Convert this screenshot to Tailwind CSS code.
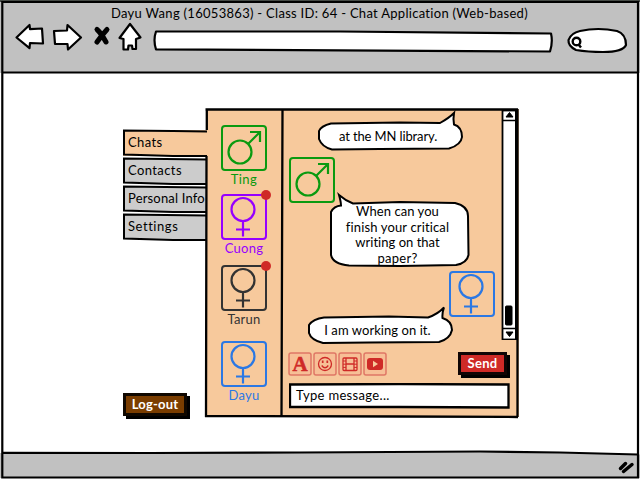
<!DOCTYPE html>
<html lang="en">
<head>
<meta charset="utf-8">
<title>Chat Application</title>
<script src="https://cdn.jsdelivr.net/npm/@tailwindcss/browser@4"></script>
</head>
<body class="bg-white">
<svg class="hidden">
  <symbol id="male" viewBox="0 0 46 46"><g fill="none" stroke="currentColor" stroke-width="2"><rect x="1" y="1" width="44" height="44" rx="3"/><circle cx="19" cy="27" r="11.500" stroke-width="2.200"/><path d="M27 19 39 7M29 7H39V17" stroke-width="2.200"/></g></symbol>
  <symbol id="female" viewBox="0 0 46 46"><g fill="none" stroke="currentColor" stroke-width="2"><rect x="1" y="1" width="44" height="44" rx="3"/><circle cx="22" cy="15.500" r="11.500" stroke-width="2.200"/><path d="M22 27V42.500M15 35.500H29" stroke-width="2.200"/></g></symbol>
</svg>
<div class="relative flex h-[480px] w-[640px] flex-col overflow-hidden bg-white font-['Lato','Noto_Sans',sans-serif] text-[13px] leading-4 text-black">
  <header class="h-[73px] bg-[#c1c1c1] pt-[5px]">
    <h1 class="mb-px h-4 pl-[111px] text-[13px] tracking-[0.290px] whitespace-nowrap">Dayu Wang (16053863) - Class ID: 64 - Chat Application (Web-based)</h1>
    <nav class="flex pl-[14px]">
      <svg class="h-9 w-[616px]" viewBox="14 22 616 36" fill="#fff" stroke="#000" stroke-width="2.200" stroke-linejoin="round">
        <path d="M16.500 37.500 29.500 25 30 29.200 42 28.500 43 43.500 30 43 29.500 48.200Z"/>
        <path d="M54 31 67 30.500 67.500 25 81 37.500 68 49.500 67.500 44 55 44Z"/>
        <path d="M97 29.500Q101 33 106 42M107 29.500Q102 35 97 42" stroke-width="5" stroke-linecap="round" fill="none"/>
        <path d="M130 24 140.500 37.500 136 39 136 49H132.500L132 45.500H128.500L128 49.500H123.500V39L119.500 38Z"/>
        <path d="M156 31.500 340 31.500 551 33.500Q553 42 550 51.500L156 49.300Q153 40 156 31.500Z"/>
        <path d="M580 31Q598 27 617 31 626 34 626 45 623 52 603 52 588 52 576 50 568 46 568.500 40 571 33 580 31Z"/>
        <circle cx="576.500" cy="41.500" r="3.800" stroke-width="2.400"/><path d="M578.500 44.500 581 47.500" stroke-width="2.500"/>
      </svg>
    </nav>
  </header>

  <main class="flex h-[379px] pl-[123px] pt-9">
    <aside class="flex w-[83px] shrink-0 flex-col items-start pt-[21px]">
      <div class="relative z-10 h-[26px] w-[88px] pl-[5px] pt-1">
        <svg class="absolute -left-0 -top-px h-7 w-[88px]" viewBox="0 0 88 28" fill="#f7c99c" stroke="#000" stroke-width="2"><path d="M0 1H88V27H0Z" stroke="none"/><path d="M84 2.500 50 2 1 1.500 1 25.500 50 27 84 27" fill="none"/></svg>
        <span class="relative tracking-[0.400px]">Chats</span>
      </div>
      <div class="relative mt-0.5 h-[26px] w-[83px] pl-[5px] pt-1">
        <svg class="absolute left-0 -top-px h-7 w-[84px]" viewBox="0 0 84 28" fill="#ccc" stroke="#000" stroke-width="2"><path d="M84 2.500 1 1.500V25.500L50 27H84"/></svg>
        <span class="relative tracking-[0.400px]">Contacts</span>
      </div>
      <div class="relative mt-0.5 h-[26px] w-[83px] pl-[5px] pt-1 whitespace-nowrap">
        <svg class="absolute left-0 -top-px h-7 w-[84px]" viewBox="0 0 84 28" fill="#ccc" stroke="#000" stroke-width="2"><path d="M84 2.500 1 1.500V25.500L50 27H84"/></svg>
        <span class="relative tracking-[0.180px]">Personal Info</span>
      </div>
      <div class="relative mt-0.5 h-[26px] w-[83px] pl-[5px] pt-1">
        <svg class="absolute left-0 -top-px h-7 w-[84px]" viewBox="0 0 84 28" fill="#ccc" stroke="#000" stroke-width="2"><path d="M84 2.500 1 1.500V25.500L50 27H84"/></svg>
        <span class="relative tracking-[0.550px]">Settings</span>
      </div>
      <button class="mt-[153px] h-[23px] w-[64px] border-[3px] border-[#100800] bg-[#7a3d00] font-bold leading-[17px] tracking-[0.200px] text-white shadow-[3px_3px_0_#000]">Log-out</button>
    </aside>

    <section class="relative flex h-[308px] w-[313px] bg-[#f7c99c]">
      <svg class="absolute inset-0 h-full w-full overflow-visible" viewBox="206 109 313 308" fill="none" stroke="#000" stroke-width="2.300"><path d="M205.500 109.500H518M282.500 110 281.500 416M206 417 206.500 156M206.800 131V110M205 416 400 416.500 518 417M517.500 109V417"/></svg>
      <div class="flex w-[76px] flex-col items-center pt-4 text-center">
        <figure class="flex flex-col items-center text-[#0a9a10]"><svg class="size-[46px]"><use href="#male"/></svg><figcaption class="h-[22px] tracking-[0.400px]">Ting</figcaption></figure>
        <figure class="relative mt-px flex flex-col items-center text-[#9600ff]"><svg class="size-[46px]"><use href="#female"/></svg><i class="absolute -right-1 -top-1 size-[10px] rounded-full bg-[#cf2a27]"></i><figcaption class="h-[25px] tracking-[0.300px]">Cuong</figcaption></figure>
        <figure class="relative flex flex-col items-center text-[#333]"><svg class="size-[46px]"><use href="#female"/></svg><i class="absolute -right-1 -top-1 size-[10px] rounded-full bg-[#cf2a27]"></i><figcaption class="h-[30px] tracking-[0.200px]">Tarun</figcaption></figure>
        <figure class="flex flex-col items-center text-[#2b78e4]"><svg class="size-[46px]"><use href="#female"/></svg><figcaption class="h-5 tracking-[0.200px]">Dayu</figcaption></figure>
      </div>

      <div class="relative flex w-[237px] flex-col">
        <div class="flex h-[231px]">
          <div class="w-[219px] pl-[7px]">
            <div class="relative ml-[28px] h-12 w-[142px] pt-[19px] text-center">
              <svg class="absolute left-0 top-0 h-12 w-[146px]" viewBox="317 109 146 48" fill="#fff" stroke="#000" stroke-width="2"><path d="M331 123.500 400 122.500 440 123Q449 118 454 113 453 119 454 124.500 462 127 462 137 461 145 449 148.500L380 149 332 149.500Q322 147 319 139V131Q321 126 331 123.500Z"/></svg>
              <span class="relative tracking-[-0.120px]">at the MN library.</span>
            </div>
            <svg class="size-[46px] text-[#0a9a10]"><use href="#male"/></svg>
            <div class="relative -mt-[11px] ml-[40px] h-[76px] w-[137px] pt-[12px] text-center">
              <svg class="absolute left-0 top-0 h-[76px] w-[141px]" viewBox="329 192 141 76" fill="#fff" stroke="#000" stroke-width="2"><path d="M353 203.500 400 202 455 203Q468 206 468 216L468.500 255Q467 263 456 265L400 266 349 265.500Q333 264 331 255V212Q334 206 341 205.500 341 202 339 195 346 201 353 203.500Z"/></svg>
              <p class="relative leading-[15.700px]"><span class="tracking-[0.050px]">When can you</span><br><span class="tracking-[0.150px]">finish your critical</span><br><span class="tracking-[0.020px]">writing on that</span><br><span class="tracking-[0.300px]">paper?</span></p>
            </div>
            <div class="mt-[3px] flex justify-end pr-[6px] text-[#2b78e4]"><svg class="size-[46px]"><use href="#female"/></svg></div>
            <div class="relative -mt-[11px] ml-[19px] h-[38px] w-[139px] pt-[16px] text-center">
              <svg class="absolute left-0 top-0 h-[38px] w-[146px]" viewBox="309 306 146 38" fill="#fff" stroke="#000" stroke-width="2"><path d="M325 317.500 390 316.500 429 317.500Q439 314 445 307.500 443 313 443.500 318 453 321 453 330 451 339 440 342L370 342.500 324 343Q312 340 310 333V325Q314 319 325 317.500Z"/></svg>
              <span class="relative tracking-[0.060px]">I am working on it.</span>
            </div>
          </div>
          <svg class="h-[231px] w-[18px]" viewBox="501 109 18 231" fill="#fff" stroke="#000"><rect x="502.500" y="110.500" width="14" height="229" stroke-width="1.800"/><path d="M502 120.500H517M502 328.500H517" stroke-width="1.500"/><path d="M506 117 509.500 112.500 513 117ZM506 332 513 332 509.500 336.500Z" fill="#000"/><rect x="505.500" y="306" width="6.500" height="19" rx="1" fill="#000"/><path d="M516.500 109V340" stroke-width="3"/></svg>
        </div>
        <div class="flex h-[43px] items-start pl-[6px] pt-3 text-[#cf2a27]">
          <svg class="mr-px h-6 w-6" viewBox="0 0 24 24" fill="none"><rect x="1" y="1" width="22" height="22" rx="2" fill="#f7bf96" stroke="#df7765" stroke-width="1.500"/><text x="12" y="18.800" text-anchor="middle" fill="#cf2a27" stroke="#cf2a27" stroke-width="0.500" font-family="Liberation Serif,serif" font-size="21" font-weight="700">A</text></svg>
          <svg class="mr-px h-6 w-6" viewBox="0 0 24 24" fill="none" stroke="currentColor"><rect x="1" y="1" width="22" height="22" rx="2" fill="#f7bf96" stroke="#df7765" stroke-width="1.500"/><circle cx="12" cy="12" r="6.500" stroke-width="1.300"/><path d="M8.700 13.500Q12 18 15.300 13.500" stroke-width="1.300"/><path d="M9.700 8.500V11M14.300 8.500V11" stroke-width="1.700"/></svg>
          <svg class="mr-px h-6 w-6" viewBox="0 0 24 24" fill="none" stroke="currentColor"><rect x="1" y="1" width="22" height="22" rx="2" fill="#f7bf96" stroke="#df7765" stroke-width="1.500"/><rect x="5" y="6" width="14" height="12.500" rx="1" stroke-width="1.300"/><path d="M8 6V18.500M16 6V18.500M8 12H16" stroke-width="1.300"/><path d="M5 9H8M5 12.200H8M5 15.400H8M16 9H19M16 12.200H19M16 15.400H19"/></svg>
          <svg class="h-6 w-6" viewBox="0 0 24 24" fill="none"><rect x="1" y="1" width="22" height="22" rx="2" fill="#f7bf96" stroke="#df7765" stroke-width="1.500"/><rect x="4" y="6" width="16" height="12" rx="3" fill="currentColor"/><path d="M10 8.800 15 12 10 15.200Z" fill="#f7c99c"/></svg>
          <button class="ml-[71px] h-[23px] w-[49px] border-[3px] border-[#100505] bg-[#cf2a27] font-bold leading-[17px] tracking-[0.300px] text-white shadow-[3px_3px_0_#000]">Send</button>
        </div>
        <div class="relative ml-[7px] h-[26px] w-[221px] pl-[7px] pt-1">
          <svg class="absolute inset-0 h-full w-full" viewBox="0 0 221 26" fill="#fff" stroke="#000" stroke-width="2.300"><path d="M1 1.500 110 1 219.500 1.500 219.500 24.500 110 24 1 24Z"/></svg>
          <span class="relative tracking-[0.330px]">Type message...</span>
        </div>
      </div>
    </section>
  </main>

  <footer class="h-[28px]">
    <svg class="h-7 w-[640px]" viewBox="0 452 640 28" stroke="#000" overflow="visible"><path d="M0 453 300 453 480 451.500 640 454.500V478H0Z" fill="#c1c1c1" stroke="none"/><path d="M2 452.800 150 453 300 452.500 480 451.500 560 452.500 638 454.500" fill="none" stroke-width="2.200"/><path d="M620.500 468.500 625.500 463.500M623.500 471.500 632 464.500" stroke-width="3.500" stroke-linecap="round"/></svg>
  </footer>
  <svg class="pointer-events-none absolute inset-0 h-full w-full" viewBox="0 0 640 480" fill="none" stroke="#000" stroke-width="2.200"><path d="M0 0H640V2H0Z" fill="#454a45" stroke="none"/><path d="M2.300 2H638V477.500H2.300ZM2 72.500H638"/></svg>
</div>
</body>
</html>
